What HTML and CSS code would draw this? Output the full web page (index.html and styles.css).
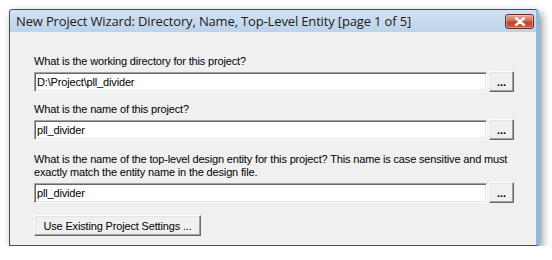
FILE: index.html
```html
<!DOCTYPE html>
<html lang="en">
<head>
    <meta charset="UTF-8">
    <title>New Project Wizard</title>
    <link rel="stylesheet" href="styles.css">
</head>
<body>
    <div class="window">
        <div class="titlebar">
            <span class="title">New Project Wizard: Directory, Name, Top-Level Entity [page 1 of 5]</span>
            <button class="close">
                <svg width="12" height="9" viewBox="0 0 12 9">
                    <path d="M2 1 L10 8 M10 1 L2 8" stroke="#fff" stroke-width="2.4" stroke-linecap="round"/>
                </svg>
            </button>
        </div>
        <div class="content">
            <div class="group g1">
                <div class="label">What is the working directory for this project?</div>
                <div class="row">
                    <input class="field" type="text" value="D:\Project\pll_divider" readonly>
                    <button class="browse">...</button>
                </div>
            </div>
            <div class="group g2">
                <div class="label">What is the name of this project?</div>
                <div class="row">
                    <input class="field" type="text" value="pll_divider" readonly>
                    <button class="browse">...</button>
                </div>
            </div>
            <div class="group g3">
                <div class="label">What is the name of the top-level design entity for this project? This name is case sensitive and must<br>exactly match the entity name in the design file.</div>
                <div class="row">
                    <input class="field" type="text" value="pll_divider" readonly>
                    <button class="browse">...</button>
                </div>
            </div>
            <button class="settings">Use Existing Project Settings ...</button>
        </div>
    </div>
</body>
</html>
```

FILE: styles.css
```css
html,body{
    margin: 0;
    padding: 0;
    background: #fff;
}
body{
    padding: 9px 0 0 9px;
    font-family: "Liberation Sans", Arial, sans-serif;
}
.window{
    width: 526px;
    height: 235px;
    border: 1px solid #4a4f55;
    border-right: 3px solid #7fc0e8;
    border-radius: 4px 4px 0 0;
    background: #f0f0f0;
    box-shadow: 3px 4px 8px rgba(0,0,0,0.45);
    display: flex;
    flex-direction: column;
}
.titlebar{
    height: 22px;
    display: flex;
    align-items: center;
    justify-content: space-between;
    padding: 0 2px 0 6px;
    background: linear-gradient(#d3e2f2, #bcd3eb);
    border-radius: 3px 3px 0 0;
}
.title{
    font-family: "Open Sans", sans-serif;
    font-size: 13px;
    letter-spacing: -0.15px;
    color: #1b1b1b;
}
.close{
    width: 29px;
    height: 15px;
    padding: 0;
    border: 1px solid #6b2a20;
    border-radius: 3px;
    background: linear-gradient(#e7a698 0%, #d36b58 45%, #c2402a 55%, #d0604a 100%);
    display: flex;
    align-items: center;
    justify-content: center;
    box-shadow: inset 0 0 0 1px rgba(255,255,255,0.35);
}
.content{
    padding: 23px 22px 0 24px;
    font-size: 11px;
    color: #000;
}
.label{
    line-height: 13px;
    letter-spacing: -0.16px;
}
.g2{
    margin-top: 11px;
}
.g3{
    margin-top: 13px;
}
.row{
    display: flex;
    gap: 2px;
    margin-top: 3px;
}
.field{
    width: 453px;
    height: 20px;
    box-sizing: border-box;
    margin: 1px 0 0;
    padding: 0 2px;
    border: 1px solid;
    border-color: #a0a0a0 #fff #fff #a0a0a0;
    box-shadow: inset 1px 1px #696969, inset -1px -1px #e3e3e3;
    background: #fff;
    font-family: "Liberation Sans", Arial, sans-serif;
    font-size: 11px;
    letter-spacing: -0.16px;
    color: #000;
    outline: none;
}
.browse, .settings{
    box-sizing: border-box;
    height: 21px;
    padding: 0;
    background: #f0f0f0;
    border: 1px solid;
    border-color: #fff #696969 #696969 #fff;
    box-shadow: inset -1px -1px #a0a0a0, inset 1px 1px #e3e3e3;
    font-family: "Liberation Sans", Arial, sans-serif;
    color: #000;
}
.browse{
    width: 25px;
    font-size: 11px;
    font-weight: bold;
    line-height: 14px;
}
.settings{
    margin-top: 12px;
    width: 167px;
    font-size: 11px;
    letter-spacing: -0.16px;
}
```
